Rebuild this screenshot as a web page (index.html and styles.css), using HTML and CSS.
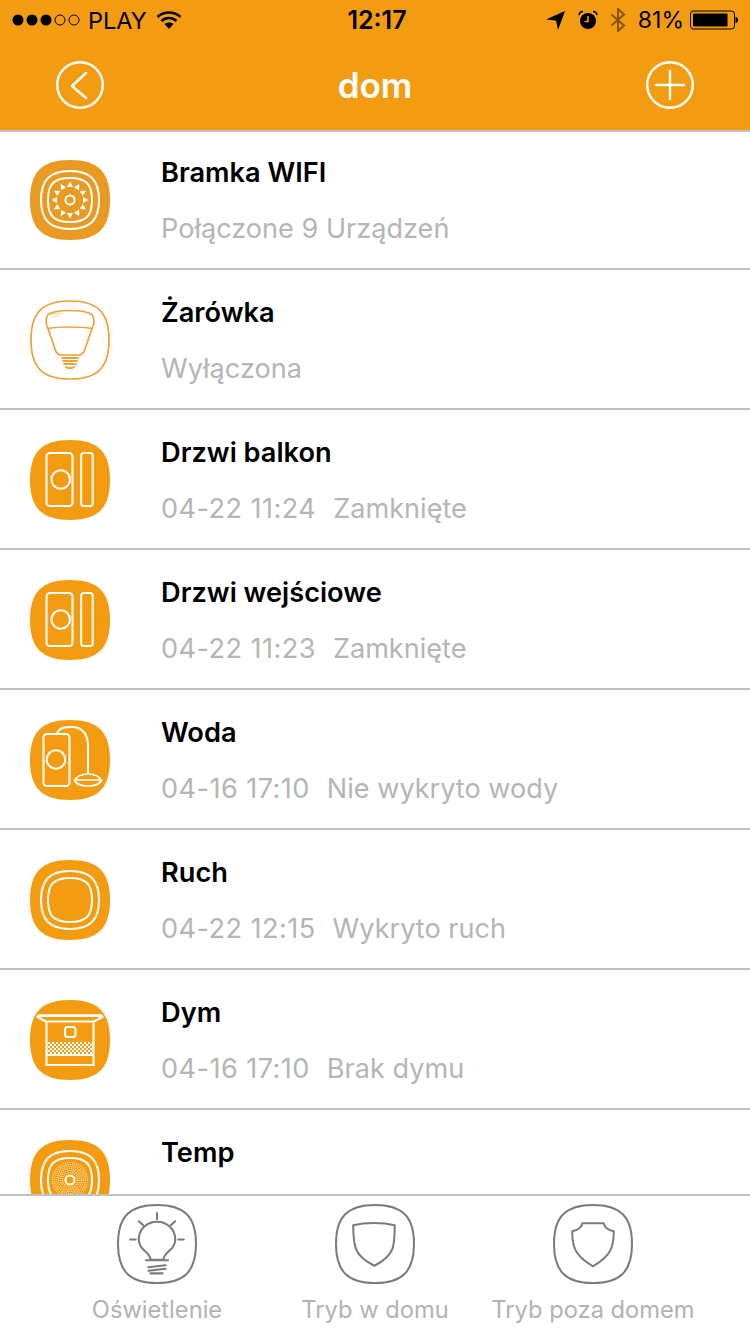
FILE: index.html
```html
<!DOCTYPE html>
<html lang="pl">
<head>
    <meta charset="UTF-8">
    <meta name="viewport" content="width=device-width, initial-scale=1.0">
    <title>dom</title>
    <link rel="stylesheet" href="styles.css">
</head>
<body>
    <!-- shared icon shapes -->
    <svg class="sprite" aria-hidden="true">
        <defs>
            <path id="squircle" d="M40 0C68 0 80 12 80 40C80 68 68 80 40 80C12 80 0 68 0 40C0 12 12 0 40 0Z"/>
            <path id="ring-outer" d="M40 11C60 11 69 20 69 40C69 60 60 69 40 69C20 69 11 60 11 40C11 20 20 11 40 11Z"/>
            <path id="ring-inner" d="M40 18C56 18 62 24 62 40C62 56 56 62 40 62C24 62 18 56 18 40C18 24 24 18 40 18Z"/>
            <polygon id="tri" points="40,21.500 43,27 37,27"/>
            <pattern id="checker" width="4" height="4" patternUnits="userSpaceOnUse">
                <rect width="2" height="2" fill="#fff"/>
                <rect x="2" y="2" width="2" height="2" fill="#fff"/>
            </pattern>

            <symbol id="icon-gateway" viewBox="0 0 80 80">
                <use href="#squircle" fill="#e89a22"/>
                <g fill="none" stroke="#fff" stroke-width="2">
                    <use href="#ring-outer"/>
                    <use href="#ring-inner"/>
                    <circle cx="40" cy="40" r="4.600"/>
                </g>
                <g fill="#fff">
                    <use href="#tri"/>
                    <use href="#tri" transform="rotate(30 40 40)"/>
                    <use href="#tri" transform="rotate(60 40 40)"/>
                    <use href="#tri" transform="rotate(90 40 40)"/>
                    <use href="#tri" transform="rotate(120 40 40)"/>
                    <use href="#tri" transform="rotate(150 40 40)"/>
                    <use href="#tri" transform="rotate(180 40 40)"/>
                    <use href="#tri" transform="rotate(210 40 40)"/>
                    <use href="#tri" transform="rotate(240 40 40)"/>
                    <use href="#tri" transform="rotate(270 40 40)"/>
                    <use href="#tri" transform="rotate(300 40 40)"/>
                    <use href="#tri" transform="rotate(330 40 40)"/>
                </g>
            </symbol>

            <symbol id="icon-bulb" viewBox="0 0 80 80">
                <g fill="none" stroke="#f0a13a" stroke-width="1.700" stroke-linejoin="round" stroke-linecap="round">
                    <path d="M40 1C67.500 1 79 12.500 79 40C79 67.500 67.500 79 40 79C12.500 79 1 67.500 1 40C1 12.500 12.500 1 40 1Z"/>
                    <path d="M40 10.500C50 10.500 58 12 62 14.500C64.500 18 64.500 24 62 28.500L55 49C54 53 52 55 49 55H31C28 55 26 53 25 49L18 28.500C15.500 24 15.500 18 18 14.500C22 12 30 10.500 40 10.500Z"/>
                    <path d="M18 28.500C30 26.500 50 26.500 62 28.500"/>
                    <path d="M21 15C24 13.500 28 13.300 32 13.300M22 17.500C25 16 28 15.800 30 15.800" stroke-width=".7" opacity=".7"/>
                    <path d="M32 58H48M33 61H47M34 64H46" stroke-width="1.800"/>
                    <path d="M36 67C38 68.500 42 68.500 44 67" stroke-width="2"/>
                </g>
            </symbol>

            <symbol id="icon-door" viewBox="0 0 80 80">
                <use href="#squircle" fill="#f39c12"/>
                <g fill="none" stroke="#fff" stroke-width="2">
                    <rect x="16.500" y="13" width="26" height="53" rx="3.500"/>
                    <circle cx="30.700" cy="39.500" r="9.300"/>
                    <rect x="51.200" y="13" width="11.500" height="53" rx="2.500"/>
                </g>
            </symbol>

            <symbol id="icon-water" viewBox="0 0 80 80">
                <use href="#squircle" fill="#f39c12"/>
                <g fill="none" stroke="#fff" stroke-width="2">
                    <rect x="13.500" y="14" width="26" height="52" rx="3.500"/>
                    <circle cx="26" cy="39.500" r="9.300"/>
                    <path d="M27 13C30 7 36 7 42 7C52 7 58 14 58 26V53"/>
                    <path d="M44.500 60.500C47 56 53 54 58 54C63 54 69 56 71.500 60.500C69 65 64 66 58 66C52 66 47 65 44.500 60.500ZM46 60H70" stroke-width="1.700"/>
                </g>
            </symbol>

            <symbol id="icon-motion" viewBox="0 0 80 80">
                <use href="#squircle" fill="#f39c12"/>
                <g fill="none" stroke="#fff" stroke-width="2">
                    <use href="#ring-outer"/>
                    <use href="#ring-inner"/>
                </g>
            </symbol>

            <symbol id="icon-smoke" viewBox="0 0 80 80">
                <use href="#squircle" fill="#f39c12"/>
                <g fill="none" stroke="#fff" stroke-width="2">
                    <path d="M8 16H72L72.500 17L64 21.500H16L7.500 17Z" stroke-linejoin="round"/>
                    <path d="M8 15.500H72" stroke-width="2.600"/>
                    <path d="M16.500 21.500V65H63.500V21.500"/>
                    <rect x="35" y="27" width="10.500" height="10" rx="2.500"/>
                    <path d="M16.500 55H63.500"/>
                </g>
                <rect x="17" y="42" width="46" height="12" fill="url(#checker)"/>
            </symbol>

            <symbol id="icon-temp" viewBox="0 0 80 80">
                <use href="#squircle" fill="#f39c12"/>
                <g fill="none" stroke="#fff" stroke-width="2">
                    <use href="#ring-outer"/>
                    <use href="#ring-inner"/>
                    <circle cx="40" cy="40" r="4.600"/>
                </g>
                <g fill="none" stroke="#fde6c2" stroke-width="1.100" stroke-dasharray="1.100 1.100">
                    <circle cx="40" cy="40" r="7.500"/>
                    <circle cx="40" cy="40" r="9.500"/>
                    <circle cx="40" cy="40" r="11.500"/>
                    <circle cx="40" cy="40" r="13.500"/>
                    <circle cx="40" cy="40" r="15.500"/>
                    <circle cx="40" cy="40" r="17.500"/>
                </g>
            </symbol>

            <path id="tab-frame" d="M39.500 1C66 1 78 12 78 39.500C78 67 66 78 39.500 78C13 78 1 67 1 39.500C1 12 13 1 39.500 1Z"/>
        </defs>
    </svg>

    <header class="top">
        <div class="status">
            <div class="status-left">
                <svg class="signal" width="68" height="14" viewBox="0 0 68 14">
                    <circle cx="6" cy="7" r="5.500"/>
                    <circle cx="20" cy="7" r="5.500"/>
                    <circle cx="34" cy="7" r="5.500"/>
                    <circle cx="48" cy="7" r="5" fill="none" stroke="#000"/>
                    <circle cx="62" cy="7" r="5" fill="none" stroke="#000"/>
                </svg>
                <span class="carrier">PLAY</span>
                <svg class="wifi" width="26" height="20" viewBox="0 0 26 20">
                    <path d="M1.500 7C8 1 18 1 24.500 7M5.500 11C10 7 16 7 20.500 11" fill="none" stroke="#000" stroke-width="2.600"/>
                    <path d="M8.500 14C11 12 15 12 17.500 14L13 19Z"/>
                </svg>
            </div>
            <div class="clock">12:17</div>
            <div class="status-right">
                <svg width="19" height="19" viewBox="0 0 19 19"><path d="M19 0L12 19L10 9.500L0 8.500Z"/></svg>
                <svg class="alarm" width="20" height="20" viewBox="0 0 20 20">
                    <circle cx="10" cy="11" r="8"/>
                    <path d="M10 6V11.500H6.500" fill="none" stroke="#f39c12" stroke-width="1.600"/>
                    <path d="M1 5C1.500 2.500 3 1.500 5 1.500M19 5C18.500 2.500 17 1.500 15 1.500" fill="none" stroke="#000" stroke-width="1.600"/>
                </svg>
                <svg class="bluetooth" width="16" height="24" viewBox="0 0 16 24">
                    <path d="M1.500 6.500L14 17.500L8 23V1L14 6.500L1.500 17.500" fill="none" stroke="#000" stroke-width="2"/>
                </svg>
                <span class="battery-text">81%</span>
                <svg class="battery" width="48" height="20" viewBox="0 0 48 20">
                    <rect x=".5" y="1" width="44" height="18" rx="3" fill="none" stroke="#000"/>
                    <rect x="3" y="3.500" width="34.500" height="13" rx="1"/>
                    <path d="M45.500 7C47 7 48 8 48 10C48 12 47 13 45.500 13Z"/>
                </svg>
            </div>
        </div>
        <nav class="nav">
            <svg width="48" height="48" viewBox="0 0 48 48">
                <circle cx="24" cy="24" r="22.800" class="nav-line"/>
                <path d="M30 12L16 25L30 37" class="nav-line"/>
            </svg>
            <div class="nav-title">dom</div>
            <svg width="48" height="48" viewBox="0 0 48 48">
                <circle cx="24" cy="24" r="22.800" class="nav-line"/>
                <path d="M24 10V38M10 24H38" class="nav-line"/>
            </svg>
        </nav>
    </header>

    <main class="list">
        <div class="row">
            <svg class="row-icon"><use href="#icon-gateway"/></svg>
            <div class="row-text">
                <div class="row-title">Bramka WIFI</div>
                <div class="row-sub">Połączone 9 Urządzeń</div>
            </div>
        </div>
        <div class="row">
            <svg class="row-icon"><use href="#icon-bulb"/></svg>
            <div class="row-text">
                <div class="row-title">Żarówka</div>
                <div class="row-sub">Wyłączona</div>
            </div>
        </div>
        <div class="row">
            <svg class="row-icon"><use href="#icon-door"/></svg>
            <div class="row-text">
                <div class="row-title">Drzwi balkon</div>
                <div class="row-sub"><span class="row-date">04-22 11:24</span>Zamknięte</div>
            </div>
        </div>
        <div class="row">
            <svg class="row-icon"><use href="#icon-door"/></svg>
            <div class="row-text">
                <div class="row-title">Drzwi wejściowe</div>
                <div class="row-sub"><span class="row-date">04-22 11:23</span>Zamknięte</div>
            </div>
        </div>
        <div class="row">
            <svg class="row-icon"><use href="#icon-water"/></svg>
            <div class="row-text">
                <div class="row-title">Woda</div>
                <div class="row-sub"><span class="row-date">04-16 17:10</span>Nie wykryto wody</div>
            </div>
        </div>
        <div class="row">
            <svg class="row-icon"><use href="#icon-motion"/></svg>
            <div class="row-text">
                <div class="row-title">Ruch</div>
                <div class="row-sub"><span class="row-date">04-22 12:15</span>Wykryto ruch</div>
            </div>
        </div>
        <div class="row">
            <svg class="row-icon"><use href="#icon-smoke"/></svg>
            <div class="row-text">
                <div class="row-title">Dym</div>
                <div class="row-sub"><span class="row-date">04-16 17:10</span>Brak dymu</div>
            </div>
        </div>
        <div class="row">
            <svg class="row-icon"><use href="#icon-temp"/></svg>
            <div class="row-text">
                <div class="row-title">Temp</div>
            </div>
        </div>
    </main>

    <footer class="tabs">
        <div class="tab">
            <svg class="tab-icon" viewBox="0 0 79 79">
                <use href="#tab-frame"/>
                <path d="M39.500 9V15M21.500 17L26 21M57.500 17L53 21M13 35H18.500M60.500 35H66"/>
                <path d="M33 55C33 50 29 48 26 45C23 42 21.500 39 21.500 35C21.500 25 29.500 17.500 39.500 17.500C49.500 17.500 57.500 25 57.500 35C57.500 39 56 42 53 45C50 48 46 50 46 55Z"/>
                <path d="M28.500 55.500H50.500"/>
                <path d="M31 62.500L48 60.500M31 66L48 64M33 68.500H45"/>
            </svg>
            <span class="tab-label">Oświetlenie</span>
        </div>
        <div class="tab">
            <svg class="tab-icon" viewBox="0 0 79 79">
                <use href="#tab-frame"/>
                <path d="M18 21C30 18 47 18 59 21C59 30 59 38 56.500 45C53 52 47 57 39 61C31 57 24 52 21 45C18 38 18 30 18 21Z"/>
            </svg>
            <span class="tab-label">Tryb w domu</span>
        </div>
        <div class="tab">
            <svg class="tab-icon" viewBox="0 0 79 79">
                <use href="#tab-frame"/>
                <path d="M29 19H50C51 23 55 26 60 27C60 34 60 39 57 45C54 52 47 57 39.500 61.500C32 57 25 52 22 45C19 39 19 34 19 27C24 26 28 23 29 19Z"/>
            </svg>
            <span class="tab-label">Tryb poza domem</span>
        </div>
    </footer>
</body>
</html>
```

FILE: styles.css
```css
html, body { margin: 0; height: 100%; }
body {
    width: 750px;
    height: 1334px;
    display: flex;
    flex-direction: column;
    overflow: hidden;
    background: #fff;
    font-family: Inter, "Noto Sans", sans-serif;
}
.sprite { display: block; width: 0; height: 0; }

.top {
    height: 130px;
    flex: none;
    background: #f39c12;
    box-shadow: 0 2px 0 #bcc2c5;
}
.status {
    height: 40px;
    display: grid;
    grid-template-columns: 1fr auto 1fr;
    align-items: center;
    color: #000;
    font-size: 24px;
}
.status-left { display: flex; align-items: center; padding-left: 12px; }
.signal { margin-right: 8px; }
.wifi { margin-left: 9px; }
.carrier { font-size: 23.5px; font-weight: 400; }
.clock { padding-left: 4px; font-size: 25px; font-weight: 600; }
.status-right {
    display: flex;
    align-items: center;
    justify-content: flex-end;
    padding-right: 12px;
}
.status-right svg { flex: none; }
.alarm { margin-left: 13px; }
.bluetooth { margin-left: 12px; opacity: .45; }
.battery-text { margin-left: 12px; font-size: 23px; }
.battery { margin-left: 6px; }

.nav {
    height: 90px;
    padding: 0 56px;
    display: flex;
    align-items: center;
    justify-content: space-between;
}
.nav-line { fill: none; stroke: #fff; stroke-width: 2.4; stroke-linecap: round; stroke-linejoin: round; }
.nav-title { color: #fff; font-size: 35px; font-weight: 600; }

.list { flex: 1; overflow: hidden; }
.row {
    box-sizing: border-box;
    height: 140px;
    padding: 23px 0 0 30px;
    display: flex;
    align-items: flex-start;
    gap: 51px;
    border-bottom: 2px solid #bcc2c5;
}
.row-icon { width: 80px; height: 80px; margin-top: 7px; flex: none; }
.row-title { height: 40px; line-height: 40px; font-size: 27.2px; font-weight: 600; color: #000; }
.row-sub {
    height: 40px;
    line-height: 40px;
    margin-top: 16px;
    font-size: 27.1px;
    color: #b5b5b5;
}
.row-date { margin-right: 17px; letter-spacing: .45px; }

.tabs {
    height: 140px;
    flex: none;
    box-sizing: border-box;
    padding: 8px 48px 0;
    border-top: 2px solid #bcc2c5;
    display: grid;
    grid-template-columns: repeat(3, 1fr);
}
.tab { display: flex; flex-direction: column; align-items: center; }
.tab-icon {
    width: 80px;
    height: 80px;
    fill: none;
    stroke: #7b7b7b;
    stroke-width: 2;
    stroke-linecap: round;
    stroke-linejoin: round;
}
.tab-label { margin-top: 11px; font-size: 23.7px; line-height: 30px; color: #b2b2b2; white-space: nowrap; }
```
